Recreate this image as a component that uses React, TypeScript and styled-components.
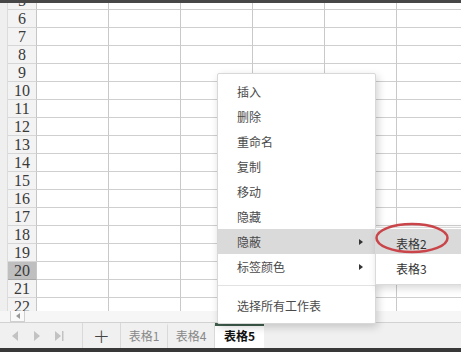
import styled, { createGlobalStyle } from "styled-components";

const GlobalStyle = createGlobalStyle`
	html, body {
		margin: 0;
		padding: 0;
		background: #ffffff;
	}
	body {
		font-family: "Noto Sans CJK SC", "Noto Sans", sans-serif;
	}
`;

const Page = styled.div`
	position: relative;
	width: 461px;
	height: 352px;
	display: flex;
	flex-direction: column;
	overflow: hidden;
	background: #ffffff;
`;

const TopBar = styled.div`
	height: 3px;
	background: #474747;
	flex-shrink: 0;
`;

const Sheet = styled.div`
	flex: 1;
	overflow: hidden;
	display: flex;
`;

const Strip = styled.div`
	width: 7px;
	background: #efefef;
	border-right: 1px solid #dcdcdc;
	flex-shrink: 0;
`;

const Rows = styled.div`
	margin-top: -11px;
	flex: 1;
`;

const Row = styled.div`
	display: flex;
	height: 18px;
`;

const RowHead = styled.div<{ $active?: boolean }>`
	width: 28px;
	height: 17px;
	flex-shrink: 0;
	border-right: 1px solid #c6c6c6;
	border-bottom: 1px solid ${(p) => (p.$active ? "#a8a8a8" : "#d6d6d6")};
	background: ${(p) => (p.$active ? "#bfbfbf" : "#f3f3f3")};
	color: #3a3a3a;
	font-family: "Liberation Serif", "DejaVu Serif", serif;
	font-size: 16px;
	line-height: 18px;
	text-align: center;
`;

const Cell = styled.div`
	width: 71px;
	height: 17px;
	flex-shrink: 0;
	border-right: 1px solid #c9c9c9;
	border-bottom: 1px solid #cfcfcf;
`;

const ScrollRow = styled.div`
	height: 11px;
	flex-shrink: 0;
	display: flex;
	background: #f6f6f6;
	border-bottom: 1px solid #d2d2d2;
`;

const ScrollBtn = styled.div`
	margin-left: 10px;
	width: 13px;
	height: 10px;
	border: 1px solid #d0d0d0;
	border-top: none;
	background: #fafafa;
	display: flex;
	align-items: center;
	justify-content: center;
`;

const TabBar = styled.div`
	height: 25px;
	flex-shrink: 0;
	display: flex;
	background: #f0f0f0;
`;

const NavGroup = styled.div`
	width: 82px;
	display: flex;
	align-items: center;
	border-right: 1px solid #d9d9d9;
`;

const NavBtn = styled.div`
	width: 22px;
	display: flex;
	justify-content: center;
	align-items: center;
	&:first-child {
		margin-left: 4px;
	}
`;

const AddBtn = styled.div`
	width: 37px;
	border-right: 1px solid #d9d9d9;
	display: flex;
	align-items: center;
	justify-content: center;
	font-size: 20px;
	font-weight: 300;
	color: #444;
	font-family: "DejaVu Sans", sans-serif;
`;

const Tab = styled.div<{ $active?: boolean }>`
	width: ${(p) => (p.$active ? "49px" : "47px")};
	box-sizing: border-box;
	border-right: ${(p) => (p.$active ? "none" : "1px solid #d9d9d9")};
	border-top: 3px solid ${(p) => (p.$active ? "#3f5e4c" : "transparent")};
	background: ${(p) => (p.$active ? "#ffffff" : "transparent")};
	display: flex;
	align-items: center;
	justify-content: center;
	padding-bottom: 3px;
	font-size: 12px;
	font-weight: ${(p) => (p.$active ? 700 : 400)};
	color: ${(p) => (p.$active ? "#111" : "#888")};
`;

const BottomBar = styled.div`
	height: 4px;
	flex-shrink: 0;
	background: #383838;
`;

const Menu = styled.div`
	position: absolute;
	left: 217px;
	top: 73px;
	width: 157px;
	padding: 5px 0;
	background: #ffffff;
	border: 1px solid #d8d8d8;
	border-radius: 2px;
	box-shadow: 2px 3px 8px rgba(0, 0, 0, 0.18);
`;

const Item = styled.div<{ $hover?: boolean }>`
	height: 25px;
	display: flex;
	align-items: center;
	justify-content: space-between;
	padding: 0 12px 0 19px;
	font-size: 12px;
	color: #4a4a4a;
	background: ${(p) => (p.$hover ? "#dadada" : "transparent")};
`;

const Arrow = styled.span`
	width: 0;
	height: 0;
	border-top: 3px solid transparent;
	border-bottom: 3px solid transparent;
	border-left: 4px solid #333;
`;

const Separator = styled.div`
	height: 1px;
	background: #e2e2e2;
	margin: 6px 0 7px;
`;

const SubMenu = styled.div`
	position: absolute;
	left: 375px;
	top: 227px;
	width: 100px;
	padding: 1px 0 5px;
	background: #ffffff;
	border: 1px solid #dadada;
	box-shadow: 2px 3px 8px rgba(0, 0, 0, 0.16);
`;

const SubItem = styled.div<{ $hover?: boolean }>`
	height: 25px;
	display: flex;
	align-items: center;
	padding: 4px 0 0 20px;
	box-sizing: border-box;
	font-size: 12px;
	color: #333;
	background: ${(p) => (p.$hover ? "#dadada" : "transparent")};
`;

const Mark = styled.svg`
	position: absolute;
	left: 370px;
	top: 218px;
	overflow: visible;
`;

const rows = Array.from({ length: 18 }, (_, i) => i + 5);
const menuItems = ["插入", "删除", "重命名", "复制", "移动", "隐藏"];

function App() {
	return (
		<Page>
			<GlobalStyle />
			<TopBar />
			<Sheet>
				<Strip />
				<Rows>
					{rows.map((n) => (
						<Row key={n}>
							<RowHead $active={n === 20}>{n}</RowHead>
							{[0, 1, 2, 3, 4, 5].map((c) => (
								<Cell key={c} />
							))}
						</Row>
					))}
				</Rows>
			</Sheet>
			<ScrollRow>
				<ScrollBtn>
					<svg width="4" height="6" viewBox="0 0 4 6">
						<path d="M4 0 L0 3 L4 6 Z" fill="#9a9a9a" />
					</svg>
				</ScrollBtn>
			</ScrollRow>
			<TabBar>
				<NavGroup>
					<NavBtn>
						<svg width="8" height="10" viewBox="0 0 8 10">
							<path d="M7 0 L1 5 L7 10 Z" fill="#c2c2c2" />
						</svg>
					</NavBtn>
					<NavBtn>
						<svg width="8" height="10" viewBox="0 0 8 10">
							<path d="M1 0 L7 5 L1 10 Z" fill="#c2c2c2" />
						</svg>
					</NavBtn>
					<NavBtn>
						<svg width="10" height="10" viewBox="0 0 10 10">
							<path d="M1 0 L7 5 L1 10 Z" fill="#c2c2c2" />
							<rect x="8" y="0" width="1.5" height="10" fill="#c2c2c2" />
						</svg>
					</NavBtn>
				</NavGroup>
				<AddBtn>+</AddBtn>
				<Tab>表格1</Tab>
				<Tab>表格4</Tab>
				<Tab $active>表格5</Tab>
			</TabBar>
			<BottomBar />

			<Menu>
				{menuItems.map((t) => (
					<Item key={t}>{t}</Item>
				))}
				<Item $hover>
					隐蔽
					<Arrow />
				</Item>
				<Item>
					标签颜色
					<Arrow />
				</Item>
				<Separator />
				<Item>选择所有工作表</Item>
			</Menu>

			<SubMenu>
				<SubItem $hover>表格2</SubItem>
				<SubItem>表格3</SubItem>
			</SubMenu>

			<Mark width="90" height="40">
				<ellipse cx="42" cy="20" rx="35.5" ry="14" fill="none" stroke="#c9454a" strokeWidth="2.5" />
			</Mark>
		</Page>
	);
}

export default App;
